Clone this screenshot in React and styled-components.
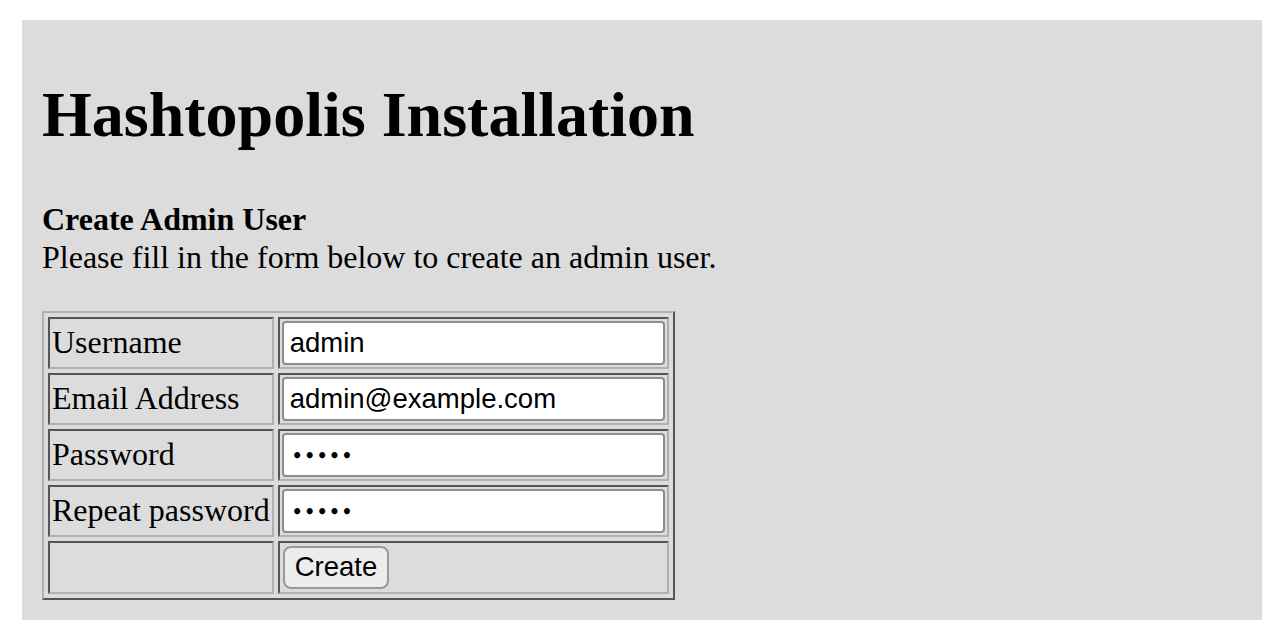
import React from 'react';
import styled, { createGlobalStyle } from 'styled-components';

const GlobalStyle = createGlobalStyle`
  html, body {
    margin: 0;
    padding: 0;
    background: #fff;
  }
  body {
    font-family: "Liberation Serif", "Times New Roman", serif;
    color: #000;
  }
`;

const Panel = styled.div`
  margin: 20px 16px 0 22px;
  padding: 20px;
  background: #dcdcdc;
  font-size: 32px;
`;

const Title = styled.h1`
  font-size: 64px;
  font-weight: bold;
  margin: 38px 0 48px;
  line-height: 1.15;
`;

const Intro = styled.p`
  margin: 0 0 35px;
  line-height: 38px;
`;

const FormTable = styled.table`
  border-collapse: separate;
  border-spacing: 4px;
  border-style: solid;
  border-width: 2px;
  border-color: #b0b0b0 #555 #555 #b0b0b0;
`;

const Cell = styled.td`
  padding: 2px;
  border-style: solid;
  border-width: 2px;
  border-color: #555 #b0b0b0 #b0b0b0 #555;
  vertical-align: middle;
  white-space: nowrap;
  line-height: 35px;
`;

const Field = styled.input`
  box-sizing: border-box;
  display: block;
  width: 383px;
  height: 44px;
  padding: 0 6px;
  border: 2px solid #8c8c8c;
  border-radius: 4px;
  background: #fff;
  font-family: "Liberation Sans", Arial, sans-serif;
  font-size: 27.5px;
  color: #000;
  outline: none;
`;

// password fields show small spaced bullets as real text
const Secret = styled(Field)`
  font-family: "DejaVu Sans", sans-serif;
  font-size: 17px;
  font-weight: bold;
  letter-spacing: 1.6px;
  padding: 3px 7px 0 8px;
`;

const SubmitButton = styled.button`
  box-sizing: border-box;
  height: 43px;
  padding: 0 10px;
  border: 2px solid #9a9a9a;
  border-radius: 8px;
  background: #ececec;
  font-family: "Liberation Sans", Arial, sans-serif;
  font-size: 27.5px;
  color: #000;
  margin: 1px 0 1px 1px;
`;

const rows = [
  { label: 'Username', secret: false, value: 'admin' },
  { label: 'Email Address', secret: false, value: 'admin@example.com' },
  { label: 'Password', secret: true, value: '\u2022\u2022\u2022\u2022\u2022' },
  { label: 'Repeat password', secret: true, value: '\u2022\u2022\u2022\u2022\u2022' },
];

export default function App() {
  return (
    <>
      <GlobalStyle />
      <Panel>
        <Title>Hashtopolis Installation</Title>
        <Intro>
          <b>Create Admin User</b>
          <br />
          Please fill in the form below to create an admin user.
        </Intro>
        <FormTable>
          <tbody>
            {rows.map((r) => (
              <tr key={r.label}>
                <Cell>{r.label}</Cell>
                <Cell>
                  {r.secret ? (
                    <Secret type="text" defaultValue={r.value} readOnly />
                  ) : (
                    <Field type="text" defaultValue={r.value} readOnly />
                  )}
                </Cell>
              </tr>
            ))}
            <tr>
              <Cell />
              <Cell>
                <SubmitButton type="button">Create</SubmitButton>
              </Cell>
            </tr>
          </tbody>
        </FormTable>
      </Panel>
    </>
  );
}
